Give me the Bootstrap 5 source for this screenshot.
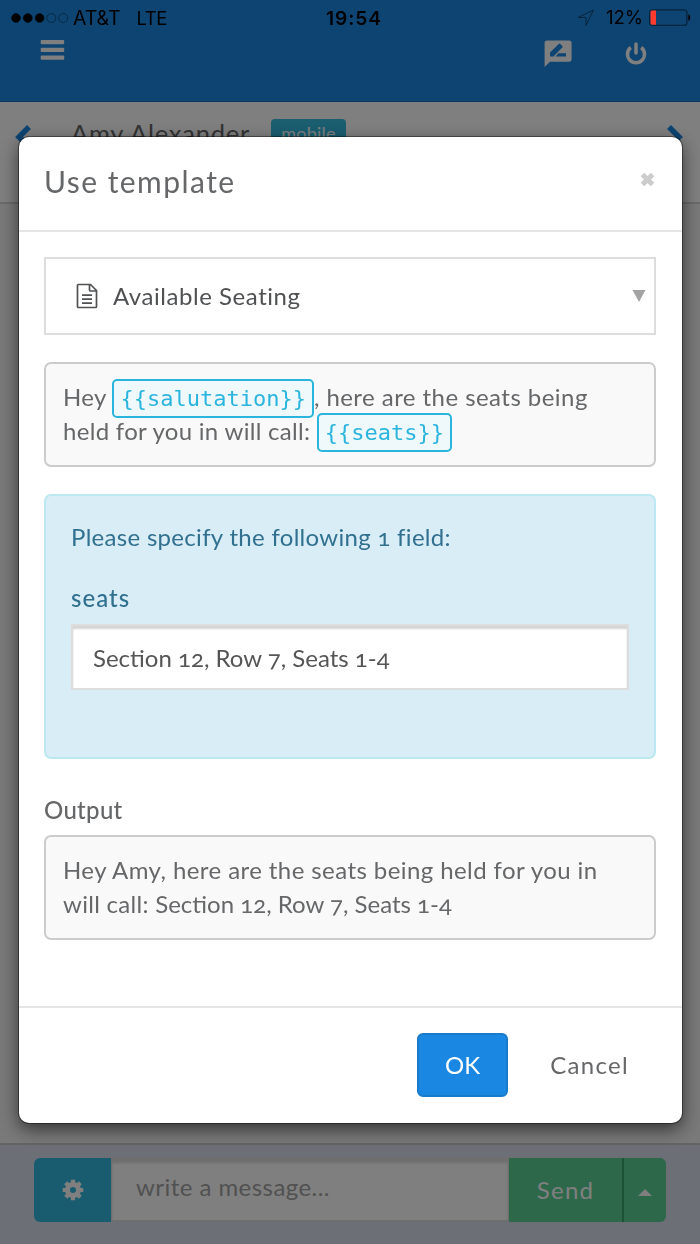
<!DOCTYPE html>
<html lang="en">
<head>
<meta charset="utf-8">
<meta name="viewport" content="width=device-width, initial-scale=1">
<title>Use template</title>
<link href="https://cdn.jsdelivr.net/npm/bootstrap@5.3.0/dist/css/bootstrap.min.css" rel="stylesheet">
<style>
  body { font-family: Lato, "Open Sans", sans-serif; font-size: 24px; line-height: 34px; color: #666769; background: #f3f3f3; height: 1244px; overflow: hidden; letter-spacing: .3px; font-variant-numeric: oldstyle-nums; }
  input { font-variant-numeric: inherit; }
  svg { display: block; flex: none; }
  .statusbar { height: 36px; z-index: 2000; color: #000; font: 18.7px/36px Inter, "Liberation Sans", sans-serif; letter-spacing: -.1px; }
  .statusbar .carrier { font-size: 19.500px; margin-left: 2px; }
  .statusbar .lte { font-size: 18.500px; letter-spacing: -.4px; }
  .statusbar .clock { font-weight: 600; letter-spacing: .9px; font-size: 19.200px; }
  .topbar { height: 102px; background: #1a88e2; border-bottom: 1px solid #1571bd; color: #fff; padding: 39px 53px 0 40px; }
  .contact { height: 102px; background: #fff; border-bottom: 2px solid #d5d5d5; padding: 14px 17px 0 15px; color: #1a88e2; }
  .contact .name { color: #666769; font-size: 25.500px; letter-spacing: .75px; }
  .contact .tag { background: #34bce0; color: #fff; font-size: 18px; line-height: 29px; border-radius: 4px; width: 75px; height: 31px; font-weight: 400; letter-spacing: .2px; margin: 3px 0 0 21px; }
  .composer { height: 101px; flex: none; background: #d8dfea; border-top: 2px solid #c8c8ca; padding: 13px 34px 0; }
  .composer .bar { height: 64px; }
  .composer .gear { width: 77px; flex: none; background: #34b8de; color: #fff; border-radius: 6px 0 0 6px; }
  .composer .form-control { border: 1px solid #dcdcdc; border-width: 2px 1px; border-radius: 0; font-size: 24px; padding: 0 24px 6px; box-shadow: inset 0 3px 3px #ddd; letter-spacing: .45px; }
  .composer .form-control::placeholder { color: #a2a2a2; }
  .composer .send { background: #5ad096; color: #fff; width: 115px; flex: none; border-radius: 0; border-right: 2px solid #36a56c; font-size: 24px; letter-spacing: 1.200px; }
  .composer .more { background: #5ad096; width: 42px; flex: none; border-radius: 0 6px 6px 0; }
  .modal { overflow: hidden; }
  .modal-dialog { width: 663px; max-width: none; margin: 137px 0 0 19px; }
  .modal-content { height: 986px; border: 0; border-radius: 10px; box-shadow: 0 0 0 1px rgba(0,0,0,.4), 0 6px 18px rgba(0,0,0,.6); color: inherit; }
  .modal-header { height: 95px; padding: 0 23px 5px 25px; border-bottom: 2px solid #e5e5e5; }
  .modal-title { font-size: 30px; line-height: 40px; letter-spacing: 1.450px; font-weight: 400; }
  .modal-body { padding: 25px 26px 0 25px; }
  .picker { height: 78px; border: 2px solid #ddd; padding: 0 8px 0 30px; color: #505153; margin-bottom: 27px; letter-spacing: .55px; }
  .preview { border: 2px solid #ccc; border-radius: 7px; background: #f9f9f9; height: 105px; padding: 16px 17px; }
  .preview .t2 { letter-spacing: .45px; }
  .preview .o1 { letter-spacing: .42px; }
  .preview .o2 { letter-spacing: 0; }
  .token { font: 22px/26px "DejaVu Sans Mono", monospace; letter-spacing: 0; color: #2bb5de; background: #eff8fb; border: 2px solid #2bb5de; border-radius: 5px; padding: 5px 6px 5px; }
  .fields { background: #d9edf7; border: 2px solid #bce8f1; border-radius: 7px; height: 265px; padding: 24px 25px; margin: 27px 0 34px; color: #31708f; }
  .fields label { margin: 27px 0 9px; font-weight: 500; letter-spacing: 1px; }
  .fields .form-control { height: 66px; border: 2px solid #ddd; border-radius: 0; font-size: 24px; color: #555; padding: 0 20px; box-shadow: inset 0 3px 2px #d4d4d4; letter-spacing: 0; }
  .modal-footer { height: 117px; border-top: 2px solid #e5e5e5; padding: 0 26px 1px; gap: 15px; }
  .modal-footer > * { margin: 0; }
  .modal-footer .btn { height: 64px; font-size: 24px; border-radius: 6px; }
  .btn-ok { width: 91px; background: #1a88e2; color: #fff; border: 2px solid #187bcb; }
  .modal-footer .btn-plain { width: 133px; color: #666769; border: 0; letter-spacing: 1.300px; }
</style>
</head>
<body class="d-flex flex-column">
  <div class="statusbar fixed-top d-flex align-items-center">
    <svg width="60" height="12" viewBox="0 0 60 12" style="margin-left:11px"><g stroke="#000" stroke-width=".8"><circle cx="5" cy="6" r="4.3"/><circle cx="16.8" cy="6" r="4.3"/><circle cx="28.6" cy="6" r="4.3"/><g fill="none" stroke="#06233c"><circle cx="40.3" cy="6" r="4.5"/><circle cx="52.2" cy="6" r="4.5"/></g></g></svg>
    <span class="carrier">AT&amp;T</span><span class="ms-3 lte">LTE</span>
    <span class="clock position-absolute start-50 translate-middle-x ms-1">19:54</span>
    <svg class="ms-auto" width="18" height="18" viewBox="0 0 18 18" fill="none" stroke="#06233c"><path d="M1 8.5 16.5 1 9 16.5V8.5Z"/></svg>
    <span class="pct" style="margin:0 6px 0 11px">12%</span>
    <svg width="42" height="18" viewBox="0 0 42 18" style="margin-right:9px"><rect x=".6" y=".8" width="37.3" height="15.6" rx="3" fill="none" stroke="#06233c" stroke-width="1.2"/><path d="M3 1.5h4v14.2H3q-1.5 0-1.5-2V3.5q0-2 1.5-2Z" fill="#ff3b30"/><path d="M39.3 5.3q2 .8 2 3.3t-2 3.3Z"/></svg>
  </div>

  <header class="topbar d-flex align-items-start flex-shrink-0">
    <svg width="25" height="22" viewBox="0 0 25 22" fill="currentColor"><rect x=".7" y="1" width="23.5" height="4.3" rx="1"/><rect x=".7" y="8.7" width="23.5" height="4.3" rx="1"/><rect x=".7" y="16.5" width="23.5" height="4.3" rx="1"/></svg>
    <svg class="ms-auto" width="28" height="29" viewBox="0 0 28 29"><path fill="#fff" d="M3 1.5h22q2.6 0 2.6 2.6v16q0 2.6-2.6 2.6H6L.6 28V4.1Q.6 1.5 3 1.5Z"/><path fill="#1a88e2" d="M6 17.5v-4L14.7 4.900q.8-.7 1.600 0l2 2q.7.8 0 1.600L9.500 17.500ZM11.500 17.500l3-3.200h7.500v3.200Z"/></svg>
    <svg width="22" height="27" viewBox="0 0 22 27" style="margin-left:53px" fill="none" stroke="#fff" stroke-width="3.500"><path d="M5.800 8.500A8.500 8.500 0 1 0 16.200 8.500"/><path d="M11 5v9" stroke-linecap="round"/></svg>
  </header>

  <section class="contact d-flex align-items-start flex-shrink-0">
    <svg class="mt-2" width="18" height="26" viewBox="0 0 18 26" fill="none" stroke="currentColor" stroke-width="5.500"><path d="M14 3 4 13l10 10"/></svg>
    <span class="name" style="margin-left:38px">Amy Alexander</span>
    <span class="badge tag p-0">mobile</span>
    <svg class="mt-2 ms-auto" width="18" height="26" viewBox="0 0 18 26" fill="none" stroke="currentColor" stroke-width="5.500"><path d="M4 3 14 13 4 23"/></svg>
  </section>

  <footer class="composer mt-auto">
    <div class="bar d-flex">
      <button class="btn gear p-0 d-flex align-items-center justify-content-center border-0"><svg width="22" height="22" viewBox="-11 -11 22 22" fill="none" stroke="#fff"><circle r="5.500" stroke-width="5"/><path stroke-width="4.200" d="M0-6V-10.300M0 6V10.300M-6 0H-10.300M6 0H10.300M-4.500-4.500-7.300-7.300M4.500 4.500 7.300 7.300M-4.500 4.500-7.300 7.300M4.500-4.500 7.300-7.300"/></svg></button>
      <input class="form-control flex-fill" placeholder="write a message...">
      <button class="btn send border-top-0 border-bottom-0 border-start-0 p-0">Send</button>
      <button class="btn more p-0 border-0 d-flex align-items-center justify-content-center" aria-label="More"><svg width="14" height="7" viewBox="0 0 14 7" class="mt-1"><path d="M0 7 7 0l7 7Z" fill="#fff"/></svg></button>
    </div>
  </footer>

  <div class="modal-backdrop show"></div>
  <div class="modal show d-block">
    <div class="modal-dialog">
      <div class="modal-content">
        <div class="modal-header">
          <h4 class="modal-title">Use template</h4>
          <svg width="15" height="15" viewBox="0 0 15 15" stroke="#ccc" stroke-width="5" class="mb-1 me-1"><path d="M2.450 2.450 12.550 12.550M12.550 2.450 2.450 12.550"/></svg>
        </div>
        <div class="modal-body">
          <div class="picker d-flex align-items-center">
            <svg width="22" height="26" viewBox="0 0 22 26" fill="none" stroke="currentColor" stroke-width="1.700"><path d="M2.500 1.500h12l6 6v16q0 1-1 1h-17q-1 0-1-1v-21q0-1 1-1ZM13.500 1.500v5.500q0 1 1 1h6M6 12.200h10M6 16.200h10M6 20.200h10"/></svg>
            <span style="margin-left:15px">Available Seating</span>
            <svg class="ms-auto" width="14" height="12" viewBox="0 0 14 12"><path d="M.5 0h13L7 12Z" fill="#a3a3a3"/></svg>
          </div>
          <div class="preview">Hey <span class="token">{{salutation}}</span><span class="t2">, here are the seats being</span><br>held for you in will call: <span class="token">{{seats}}</span></div>
          <div class="fields">
            <div>Please specify the following 1 field:</div>
            <label class="d-block" for="seats">seats</label>
            <input id="seats" class="form-control" value="Section 12, Row 7, Seats 1-4">
          </div>
          <div class="mb-2 fw-medium">Output</div>
          <div class="preview"><span class="o1">Hey Amy, here are the seats being held for you in</span><br>will call: <span class="o2">Section 12, Row 7, Seats 1-4</span></div>
        </div>
        <div class="modal-footer flex-nowrap">
          <button class="btn btn-ok p-0">OK</button>
          <button class="btn btn-plain p-0">Cancel</button>
        </div>
      </div>
    </div>
  </div>
<script src="https://cdn.jsdelivr.net/npm/bootstrap@5.3.0/dist/js/bootstrap.bundle.min.js"></script>
</body>
</html>
